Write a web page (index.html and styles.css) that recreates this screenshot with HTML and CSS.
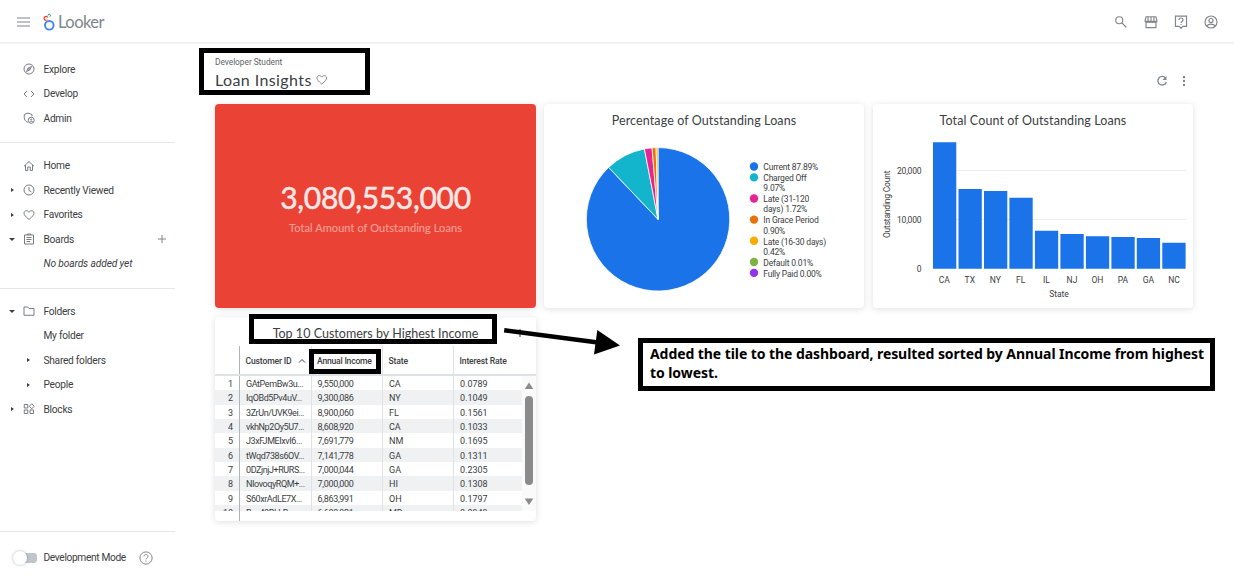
FILE: index.html
```html
<!DOCTYPE html>
<html lang="en">
<head>
<meta charset="utf-8">
<title>Loan Insights</title>
<link rel="stylesheet" href="styles.css">
</head>
<body>
<div class="app">
  <header class="topbar">
    <svg class="burger" viewBox="0 0 13 10"><path d="M0 1h13M0 5h13M0 9h13"/></svg>
    <svg class="logo" viewBox="0 0 12 18">
      <circle cx="6.300" cy="12.300" r="4.300" fill="none" stroke="#4285f4" stroke-width="1.900"/>
      <path d="M3.600 7.200A1.900 1.900 0 1 1 4.800 4.600" fill="none" stroke="#ea4335" stroke-width="1.300"/>
      <path d="M4.900 2.600A1.300 1.300 0 1 1 6.600 3.800" fill="none" stroke="#34a853" stroke-width="1"/>
      <path d="M4.300 6.300l1.300 .9" stroke="#fbbc04" stroke-width="1"/>
    </svg>
    <span class="brand">Looker</span>
    <nav class="tools">
      <svg viewBox="0 0 24 24"><circle cx="9" cy="9" r="6"/><path d="M13.500 13.500l7.500 7.500"/></svg>
      <svg viewBox="0 0 24 24"><path d="M3.500 3h17l1.500 6v2H2V9zM3.500 12v9.500h17V12M2 11c1 2.500 4 2.500 5 0 1 2.500 4 2.500 5 0 1 2.500 4 2.500 5 0 1 2.500 4 2.500 5 0M7 3v8M12 3v8M17 3v8"/></svg>
      <svg viewBox="0 0 24 24"><path d="M2.500 2h19v17.500H15L12 23l-3-3.500H2.500zM8.500 8.500c0-4.500 7-4.500 7 0 0 2.500-3.500 2.500-3.500 5M12 15.300v2"/></svg>
      <svg viewBox="0 0 24 24"><circle cx="12" cy="12" r="10.300"/><circle cx="12" cy="9.500" r="3.500"/><path d="M4.500 18.500c4-4 11-4 15 0"/></svg>
    </nav>
  </header>
  <div class="body">
    <aside class="side">
      <ul class="group first">
        <li><i></i><svg class="ico" viewBox="0 0 24 24"><circle cx="12" cy="12" r="10"/><path d="M17 7l-3.200 6.800L7 17l3.200-6.800z"/><circle cx="12" cy="12" r="1"/></svg><span>Explore</span></li>
        <li><i></i><svg class="ico" viewBox="0 0 24 24"><path d="M8 6l-6 6 6 6M16 6l6 6-6 6"/></svg><span>Develop</span></li>
        <li><i></i><svg class="ico" viewBox="0 0 24 24"><path d="M10 21C5 19 2.500 15 2.500 11V5L10 2l8 3v4"/><circle cx="16.500" cy="16.500" r="6"/><circle cx="16.500" cy="15" r="1"/><path d="M13.500 19.500c2-1.500 4-1.500 6 0"/></svg><span>Admin</span></li>
      </ul>
      <ul class="group second">
        <li><i></i><svg class="ico" viewBox="0 0 24 24"><path d="M2 12.500L12 3l10 9.500M5 10v11h4.500v-7h5v7H19V10"/></svg><span>Home</span></li>
        <li><i class="right"></i><svg class="ico" viewBox="0 0 24 24"><circle cx="12" cy="12" r="10"/><path d="M12 6v7l4.500 2.500"/></svg><span>Recently Viewed</span></li>
        <li><i class="right"></i><svg class="ico" viewBox="0 0 24 24"><path d="M12 21C5 15 2 12 2 8.200 2 3 9 1.500 12 6.500 15 1.500 22 3 22 8.200 22 12 19 15 12 21z"/></svg><span>Favorites</span></li>
        <li><i class="down"></i><svg class="ico" viewBox="0 0 24 24"><path d="M3 4h18v18H3zM8.500 4V2h7v2M7 9h10M7 13h10M7 17h7"/></svg><span>Boards</span><svg class="plus" viewBox="0 0 10 10"><path d="M5 1v8M1 5h8"/></svg></li>
        <li class="empty"><i></i><b></b><span>No boards added yet</span></li>
      </ul>
      <ul class="group third">
        <li><i class="down"></i><svg class="ico" viewBox="0 0 24 24"><path d="M2 4h7.500l2.500 3h10v13.500H2z"/></svg><span>Folders</span></li>
        <li><i></i><b></b><span>My folder</span></li>
        <li><i></i><b><i class="right"></i></b><span>Shared folders</span></li>
        <li><i></i><b><i class="right"></i></b><span>People</span></li>
        <li><i class="right"></i><svg class="ico" viewBox="0 0 24 24"><path d="M2.500 3h7v7h-7zM2.500 14h7v7h-7zM14 14h7v7h-7zM17.500 1.500l5 5-5 5-5-5z"/></svg><span>Blocks</span></li>
      </ul>
      <div class="dev">
        <div class="switch"><div class="knob"></div></div>
        <span>Development Mode</span>
        <svg class="help" viewBox="0 0 24 24"><circle cx="12" cy="12" r="10.500"/><path d="M8.500 9.500c0-4.500 7-4.500 7 0 0 2.500-3.500 2.500-3.500 5M12 16.500v2"/></svg>
      </div>
    </aside>
    <main class="main">
      <div class="head">
        <div>
          <div class="crumb">Developer Student</div>
          <h1>Loan Insights<svg viewBox="0 0 24 24"><path d="M12 21C5 15 2 12 2 8.200 2 3 9 1.500 12 6.500 15 1.500 22 3 22 8.200 22 12 19 15 12 21z"/></svg></h1>
        </div>
        <div class="actions">
          <svg viewBox="0 0 12 12"><path d="M9.500 3A4.300 4.300 0 1 0 10.300 7" fill="none" stroke="#80868b" stroke-width="1.300"/><path d="M10.500 1v4h-4z" fill="#80868b"/></svg>
          <svg viewBox="0 0 12 12"><g fill="#80868b"><circle cx="6" cy="2" r="1.200"/><circle cx="6" cy="6" r="1.200"/><circle cx="6" cy="10" r="1.200"/></g></svg>
        </div>
      </div>
      <div class="grid">
        <section class="card kpi">
          <div class="value">3,080,553,000</div>
          <div class="label">Total Amount of Outstanding Loans</div>
        </section>
        <section class="card">
          <h2>Percentage of Outstanding Loans</h2>
          <svg class="chart" viewBox="0 33 320 171">
            <g stroke="#fff" stroke-width=".8" stroke-linejoin="round">
              <path fill="#1a73e8" d="M114 115.300V43.600A71.700 71.700 0 1 1 64.600 63.400z"/>
              <path fill="#12b5cb" d="M114 115.300L64.600 63.400A71.700 71.700 0 0 1 100.400 44.900z"/>
              <path fill="#e52592" d="M114 115.300L100.400 44.900A71.700 71.700 0 0 1 108.060 43.850z"/>
              <path fill="#e8710a" d="M114 115.300L108.060 43.850A71.700 71.700 0 0 1 112.100 43.620z"/>
              <path fill="#f9ab00" d="M114 115.300L112.100 43.620A71.700 71.700 0 0 1 114 43.600z"/>
            </g>
            <circle cx="210" cy="62.500" r="4.200" fill="#1a73e8"/><circle cx="210" cy="73.400" r="4.200" fill="#12b5cb"/><circle cx="210" cy="94.500" r="4.200" fill="#e52592"/><circle cx="210" cy="115.600" r="4.200" fill="#e8710a"/><circle cx="210" cy="136.800" r="4.200" fill="#f9ab00"/><circle cx="210" cy="158" r="4.200" fill="#7cb342"/><circle cx="210" cy="168.900" r="4.200" fill="#9334e6"/>
            <g class="tick">
              <text x="219.300" y="66.300" textLength="55">Current 87.89%</text>
              <text x="219.300" y="77" textLength="43.500">Charged Off</text>
              <text x="219.300" y="87.300" textLength="22">9.07%</text>
              <text x="219.300" y="98" textLength="46">Late (31-120</text>
              <text x="219.300" y="108.300" textLength="44">days) 1.72%</text>
              <text x="219.300" y="119" textLength="55.500">In Grace Period</text>
              <text x="219.300" y="129.800" textLength="22">0.90%</text>
              <text x="219.300" y="140.800" textLength="63">Late (16-30 days)</text>
              <text x="219.300" y="151" textLength="22">0.42%</text>
              <text x="219.300" y="161.800" textLength="50">Default 0.01%</text>
              <text x="219.300" y="172.600" textLength="58.500">Fully Paid 0.00%</text>
            </g>
          </svg>
        </section>
        <section class="card">
          <h2>Total Count of Outstanding Loans</h2>
          <svg class="chart" viewBox="0 33 320 171">
            <path d="M60 66.500h253.500M60 115.500h253.500" stroke="#eceef0" stroke-width="1"/>
            <g fill="#1a73e8">
              <path d="M60 38.300h23.300V164.700H60zM85.500 85h23.300v79.700H85.500zM111 87h23.300v77.700H111zM136.400 93.700h23.300v71h-23.300zM161.900 126.700h23.300v38h-23.300zM187.400 130h23.300v34.700h-23.300zM212.900 132.300h23.300v32.400h-23.300zM238.400 133h23.300v31.700h-23.300zM263.800 134h23.300v30.700h-23.300zM289.300 138.700h23.300v26h-23.300z"/>
            </g>
            <g class="tick end"><text x="48.500" y="69.700" textLength="24.500">20,000</text><text x="48.500" y="119" textLength="24.500">10,000</text><text x="48.500" y="168">0</text></g>
            <g class="tick mid">
              <text x="71.300" y="179">CA</text><text x="96.800" y="179">TX</text><text x="122.300" y="179">NY</text><text x="147.700" y="179">FL</text><text x="173.500" y="179">IL</text><text x="199" y="179">NJ</text><text x="224.400" y="179">OH</text><text x="250" y="179">PA</text><text x="275.400" y="179">GA</text><text x="301" y="179">NC</text>
              <text x="186" y="192.500">State</text>
              <text transform="translate(16.800 100.300) rotate(-90)" textLength="67.500">Outstanding Count</text>
            </g>
          </svg>
        </section>
        <section class="card tablecard">
          <h2>Top 10 Customers by Highest Income</h2>
          <div class="row th"><span></span><span>Customer ID <svg viewBox="0 0 8 6"><path d="M1 4.500l3-3 3 3"/></svg></span><span>Annual Income</span><span>State</span><span>Interest Rate</span></div>
          <div class="scroller">
            <div class="rows">
              <div class="row"><span>1</span><span>GAtPemBw3u...</span><span>9,550,000</span><span>CA</span><span>0.0789</span></div>
              <div class="row"><span>2</span><span>IqOBd5Pv4uV...</span><span>9,300,086</span><span>NY</span><span>0.1049</span></div>
              <div class="row"><span>3</span><span>3ZrUn/UVK9ei...</span><span>8,900,060</span><span>FL</span><span>0.1561</span></div>
              <div class="row"><span>4</span><span>vkhNp2Oy5U7...</span><span>8,608,920</span><span>CA</span><span>0.1033</span></div>
              <div class="row"><span>5</span><span>J3xFJMEIxvI6...</span><span>7,691,779</span><span>NM</span><span>0.1695</span></div>
              <div class="row"><span>6</span><span>tWqd738s6OV...</span><span>7,141,778</span><span>GA</span><span>0.1311</span></div>
              <div class="row"><span>7</span><span>0DZjnjJ+RURS...</span><span>7,000,044</span><span>GA</span><span>0.2305</span></div>
              <div class="row"><span>8</span><span>NIovoqyRQM+...</span><span>7,000,000</span><span>HI</span><span>0.1308</span></div>
              <div class="row"><span>9</span><span>S60xrAdLE7X...</span><span>6,863,991</span><span>OH</span><span>0.1797</span></div>
              <div class="row"><span>10</span><span>Bay40BLLB...</span><span>6,608,921</span><span>MD</span><span>0.0949</span></div>
            </div>
            <svg class="bar" viewBox="0 0 14 135"><path d="M7 6.500l4.300 6.500H2.700zM7 129l4.300-6.500H2.700z" fill="#8b8b8b"/><rect x="3" y="20" width="8" height="89" rx="4" fill="#8b8b8b"/></svg>
          </div>
          <div class="foot"></div>
        </section>
      </div>
    </main>
  </div>
  <div class="frame frame-title"></div>
  <div class="frame frame-tile"></div>
  <div class="frame frame-col"></div>
  <svg class="arrow" viewBox="500 320 124 40"><path d="M520 329v8" stroke="#333" stroke-width="1"/><path d="M504.200 330.300L600 342.800" stroke="#000" stroke-width="4.500"/><path d="M597.300 330L620 345.500 594 354.500z"/></svg>
  <div class="note">Added the tile to the dashboard, resulted sorted by Annual Income from highest<br>to lowest.</div>
</div>
</body>
</html>
```
FILE: styles.css
```css
* { box-sizing: border-box; }
body { margin: 0; background: #fff; font-family: Roboto, "Liberation Sans", sans-serif; font-size: 10.2px; color: #3c4043; }
svg { display: block; fill: none; flex: none; }
ul, h1, h2 { margin: 0; padding: 0; font-weight: 400; list-style: none; }
.app { position: relative; width: 1234px; height: 583px; overflow: hidden; display: flex; flex-direction: column; }
.topbar { height: 44px; flex: none; display: flex; align-items: center; padding: 1px 16px 0 17px; border-bottom: 2px solid #f1f2f3; }
.burger { width: 13px; height: 10px; stroke: #80868b; stroke-width: 1.2; }
.logo { width: 12px; height: 18px; margin: 0 3px 0 13px; }
.brand { font-family: Lato, sans-serif; font-size: 16.5px; letter-spacing: -.55px; color: #80868b; }
.tools { margin-left: auto; display: flex; gap: 16px; }
.tools svg { width: 14px; height: 14px; stroke: #80868b; stroke-width: 2; }
.body { flex: 1; display: flex; min-height: 0; }
.side { width: 175px; flex: none; display: flex; flex-direction: column; }
.group { padding-left: 8.500px; border-bottom: 1px solid #e4e7ea; }
.first { height: 99px; padding-top: 13px; }
.second { height: 146px; padding-top: 10.500px; }
.third { padding-top: 10px; border: 0; }
.group li { height: 24.550px; display: flex; align-items: center; white-space: nowrap; letter-spacing: -.27px; }
.group li > i { width: 14px; flex: none; }
.ico, .group b { width: 12px; height: 12px; margin-right: 9px; flex: none; }
.ico { stroke: #6f767d; stroke-width: 1.900; }
.group b { display: flex; align-items: center; padding-left: 2px; }
.right::before, .down::before { content: ""; display: block; margin-left: 2.500px; border: 2.500px solid transparent; }
.right::before { width: 0; border-left: 3.500px solid #3c4043; border-right: 0; }
.down::before { width: 0; margin-left: .5px; border-top: 3.500px solid #3c4043; border-bottom: 0; border-left-width: 3px; border-right-width: 3px; }
.plus { width: 10px; height: 10px; margin-left: auto; margin-right: 8px; stroke: #80868b; stroke-width: 1; }
.group .empty { font-style: italic; letter-spacing: -.12px; }
.dev { margin-top: auto; height: 52px; border-top: 1px solid #e4e7ea; display: flex; align-items: center; padding-left: 13px; }
.dev span { margin-left: 6.500px; letter-spacing: -.35px; white-space: nowrap; }
.switch { width: 24px; height: 10px; border-radius: 3px; background: linear-gradient(90deg, transparent 8px, #c1c6cc 8px); display: flex; align-items: center; }
.knob { width: 14px; height: 14px; border-radius: 50%; background: #fff; box-shadow: 0 0 3px rgba(60,64,67,.4); flex: none; }
.help { width: 14px; height: 14px; margin-left: 13px; stroke: #80868b; stroke-width: 1.700; }
.main { flex: 1; padding-left: 40px; }
.head { height: 60px; display: flex; justify-content: space-between; width: 978px; padding-top: 13px; }
.crumb { font-size: 8.400px; line-height: 11px; color: #5f6368; letter-spacing: -.05px; }
h1 { font-family: Lato, sans-serif; font-size: 16px; line-height: 20px; margin-top: 2px; display: flex; align-items: center; letter-spacing: .4px; white-space: pre; }
h1 svg { width: 11.500px; height: 11.500px; stroke: #80868b; stroke-width: 2; margin-left: 4.500px; }
.actions { display: flex; gap: 10px; padding: 17.500px 3px 0 0; }
.actions svg { width: 12px; height: 12px; }
.grid { display: grid; grid-template-columns: repeat(3, 320px); grid-template-rows: 204px 204px; gap: 9px; }
.card { border-radius: 4px; background: #fff; box-shadow: 0 1px 6px rgba(60,64,67,.17); overflow: hidden; }
.card h2 { font-family: Lato, sans-serif; font-size: 12.500px; height: 33px; line-height: 33px; text-align: center; letter-spacing: .1px; white-space: nowrap; }
.kpi { background: #ea4335; width: 321px; text-align: center; padding-top: 74px; font-family: Lato, sans-serif; color: #fce8e6; }
.value { font-size: 30px; line-height: 38px; letter-spacing: -.3px; -webkit-text-stroke: .5px #fce8e6; }
.label { font-size: 11px; line-height: 14px; margin-top: 5px; letter-spacing: .08px; color: #f69b92; -webkit-text-stroke: .2px #f69b92; }
.chart { width: 320px; height: 171px; }
.tick { font-size: 8.500px; fill: #3c4043; }
.end { text-anchor: end; }
.mid { text-anchor: middle; }
.tablecard { display: flex; flex-direction: column; width: 321px; }
.card.tablecard h2 { height: 29px; flex: none; letter-spacing: .02px; }
.row { display: grid; grid-template-columns: 25px 72px 71px 71px 69px; height: 14.330px; line-height: 16px; font-size: 9px; }
.row span { border-right: 1px solid #e0e3e6; padding-left: 6px; white-space: nowrap; overflow: hidden; }
.row span:first-child { border-right-color: #aeb4ba; text-align: right; padding: 0 6px 0 0; }
.row span:last-child { border: 0; }
.rows .row:nth-child(even) { background: #eff1f2; }
.rows .row span:nth-child(2) { letter-spacing: -.42px; }
.rows .row span:nth-child(3) { letter-spacing: -.32px; padding-left: 5.500px; }
.row.th { grid-template-columns: 25px 72px 71px 71px 82px; height: 30px; line-height: 30px; font-size: 8.600px; font-weight: 500; letter-spacing: -.16px; border-bottom: 2px solid #dfe2e5; flex: none; }
.th span { padding-left: 5.500px; }
.th span:nth-child(3) { padding-left: 5px; letter-spacing: -.22px; }
.th svg { display: inline-block; width: 8px; height: 6px; stroke: #3c4043; margin-left: 5px; }
.scroller { height: 134.500px; overflow: hidden; flex: none; display: flex; }
.rows { width: 308px; }
.bar { width: 14px; height: 135px; margin-left: -1px; background: #fafafa; }
.foot { width: 25px; flex: 1; border-right: 1px solid #aeb4ba; }
.frame { position: absolute; border: 5px solid #000; }
.frame-title { left: 199px; top: 48px; width: 171px; height: 47px; }
.frame-tile { left: 249px; top: 314px; width: 248px; height: 30px; }
.frame-col { left: 309px; top: 349px; width: 72px; height: 25px; }
.arrow { position: absolute; left: 500px; top: 320px; width: 124px; height: 40px; fill: #000; }
.note { position: absolute; left: 638px; top: 338px; width: 577px; height: 53px; border: 5px solid #000; background: #fff; padding: 1px 0 0 7px; font: 700 14px/19px "Noto Sans", "Open Sans", sans-serif; letter-spacing: -.07px; color: #000; white-space: nowrap; }
```
